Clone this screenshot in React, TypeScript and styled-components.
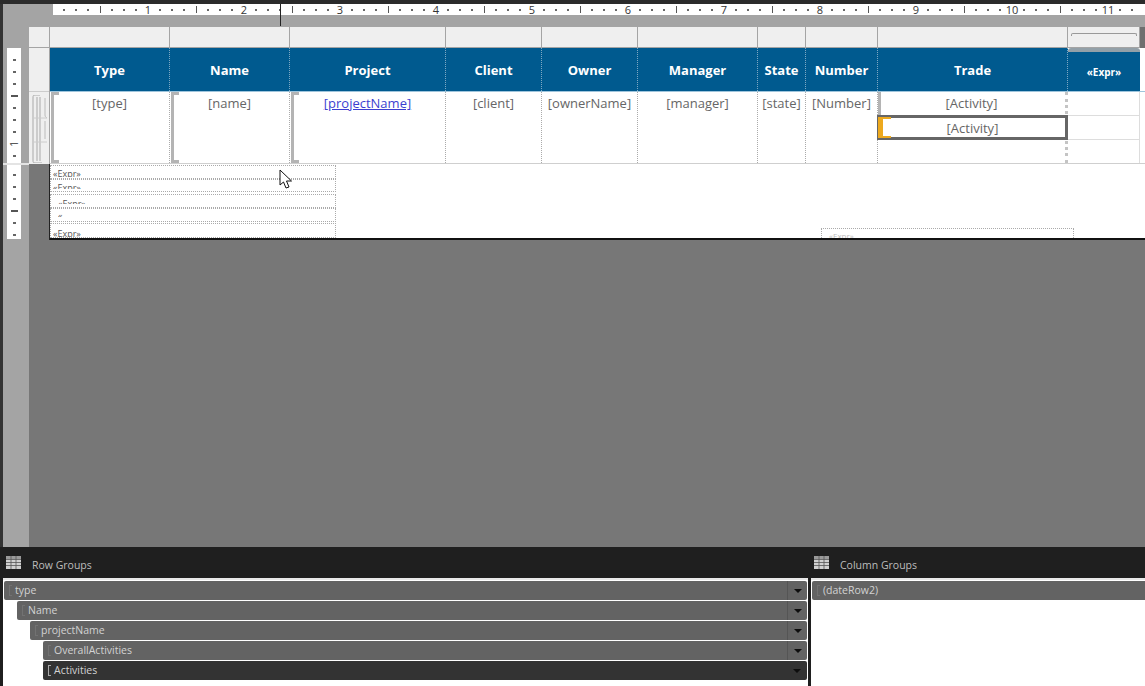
import React from "react";
import styled, { createGlobalStyle } from "styled-components";

const Global = createGlobalStyle`
  html, body { margin: 0; padding: 0; background: #1f1f1f; }
  * { box-sizing: border-box; }
`;

const Root = styled.div`
  position: relative;
  width: 1145px;
  height: 686px;
  overflow: hidden;
  display: flex;
  flex-direction: column;
  font-family: "Open Sans", "Noto Sans", sans-serif;
`;
const TopEdge = styled.div`height: 4px; background: #2b2b2b; flex: none;`;
const Designer = styled.div`height: 543px; flex: none; display: flex;`;
const LeftEdge = styled.div`width: 3px; background: #333; flex: none;`;
const Surface = styled.div`flex: 1; display: flex; flex-direction: column; background: #a4a4a4; min-width: 0;`;
const RulerBand = styled.div`height: 23px; flex: none; padding-left: 50px;`;
const HRuler = styled.div`
  height: 11px;
  background: #fff;
  padding-left: 5px;
  display: flex;
  align-items: center;
`;
const HCell = styled.span`
  flex: none;
  width: 12px;
  text-align: center;
  font-size: 11px;
  line-height: 11px;
  color: #333;
  display: flex;
  align-items: center;
  justify-content: center;
`;
const Dot = styled.i`display: block; width: 2px; height: 2px; background: #666;`;
const Tick = styled.i`display: block; width: 1px; height: 7px; background: #555;`;
const Work = styled.div`flex: 1; display: flex; min-height: 0;`;
const Gutter = styled.div`width: 26px; flex: none; padding: 21px 0 0 4px;`;
const VRuler = styled.div<{ $h: number }>`
  width: 14px;
  height: ${(p) => p.$h}px;
  background: #fff;
  display: flex;
  flex-direction: column;
  align-items: center;
`;
const VCell = styled.span`
  flex: none;
  height: 12px;
  display: flex;
  align-items: center;
  justify-content: center;
  font-size: 10px;
  color: #333;
`;
const VDot = styled.i`display: block; width: 3px; height: 2px; background: #666;`;
const VTick = styled.i`display: block; width: 7px; height: 2px; background: #555;`;
const VDigit = styled.span`display: block; transform: rotate(-90deg); line-height: 10px;`;
const GutterRule = styled.div`height: 2px; margin-left: -4px; width: 26px; background: #e4e4e4;`;
const Spacer = styled.div<{ $h: number }>`height: ${(p) => p.$h}px; flex: none;`;

const Canvas = styled.div`flex: 1; background: #777; display: flex; flex-direction: column; min-width: 0;`;
const Strip = styled.div`height: 21px; flex: none; display: flex; gap: 1px; background: #a4a4a4;`;
const StripCell = styled.div<{ $w: number }>`
  flex: none;
  width: ${(p) => p.$w}px;
  height: 20px;
  background: #efefef;
  display: flex;
  align-items: center;
  justify-content: center;
`;
const StripEnd = styled.div`flex: 1; background: #6f6f6f;`;
const StripBracket = styled.i`
  display: block;
  width: 66px;
  height: 3px;
  margin-top: -5px;
  border: 1px solid #999;
  border-bottom: none;
  border-radius: 2px 2px 0 0;
`;
const TableBand = styled.div`display: flex; flex: none; height: 116px;`;
const Handles = styled.div`
  width: 21px;
  flex: none;
  display: flex;
  flex-direction: column;
  background: #efefef;
  border-right: 1px solid #a4a4a4;
`;
const HandleHead = styled.div`height: 44px; flex: none; border-bottom: 1px solid #ccc;`;
const HandleBody = styled.div`flex: 1; display: flex; padding: 3px 0 0 3px;`;
const TableArea = styled.div`flex: 1; display: flex; flex-direction: column; background: #fff; min-width: 0;`;
const HeaderRow = styled.div`height: 44px; flex: none; display: flex; border-bottom: 1px solid #9fc5dc;`;
const HeaderCell = styled.div<{ $w: number }>`
  flex: none;
  width: ${(p) => p.$w}px;
  background: #005a8f;
  border-right: 1px dotted #7fa9c4;
  color: #fff;
  font-weight: 700;
  font-size: 13px;
  display: flex;
  align-items: center;
  justify-content: center;
`;
const ExprHead = styled(HeaderCell)`
  font-size: 10px;
  border-top: 4px solid #93a0a8;
  border-right: none;
  border-radius: 3px 3px 0 0;
`;
const BodyRow = styled.div`height: 72px; flex: none; display: flex; border-bottom: 1px solid #cfcfcf;`;
const BodyCell = styled.div<{ $w: number; $handle?: boolean }>`
  position: relative;
  flex: none;
  width: ${(p) => p.$w}px;
  border-right: 1px dotted #aaa;
  color: #666;
  font-size: 13px;
  line-height: 18px;
  padding-top: 2px;
  text-align: center;
  ${(p) =>
    p.$handle
      ? `
    &::before {
      content: "";
      position: absolute;
      left: 1px;
      top: 0;
      bottom: 0;
      width: 5px;
      border-left: 3px solid #b4b4b4;
      border-top: 3px solid #b4b4b4;
      border-bottom: 3px solid #b4b4b4;
    }`
      : ""}
`;
const LinkText = styled.a`color: #3c3fd0; text-decoration: underline;`;
const StackCell = styled.div<{ $w: number; $light?: boolean }>`
  flex: none;
  width: ${(p) => p.$w}px;
  display: flex;
  flex-direction: column;
  border-right: ${(p) => (p.$light ? "1px solid #ddd" : "3px dotted #c4c4c4")};
`;
const SubRow = styled.div<{ $h: number; $light?: boolean }>`
  position: relative;
  flex: none;
  height: ${(p) => p.$h}px;
  color: #666;
  font-size: 13px;
  line-height: 22px;
  text-align: center;
  border-bottom: ${(p) => (p.$light ? "1px solid #ddd" : "none")};
`;
const FirstSub = styled(SubRow)`
  &::before {
    content: "";
    position: absolute;
    left: 0;
    top: 0;
    width: 3px;
    height: 23px;
    background: #b4b4b4;
  }
`;
const SelectedSub = styled(SubRow)`
  border: 3px solid #666;
  margin: -1px -3px 0 -1px;
  line-height: 20px;
  background: #fff;
  &::before {
    content: "";
    position: absolute;
    left: -2px;
    top: -1px;
    bottom: -1px;
    width: 8px;
    border: 2px solid #eda91e;
    border-right: none;
    border-left-width: 5px;
  }
`;
const FooterSpace = styled.div`
  margin-left: 21px;
  height: 76px;
  flex: none;
  background: #fff;
  border-bottom: 2px solid #111;
  box-shadow: -1px 0 0 #222;
  display: flex;
  align-items: flex-end;
  overflow: hidden;
`;
const FooterStack = styled.div`width: 286px; flex: none; align-self: flex-start; padding-top: 1px; display: flex; flex-direction: column;`;
const FooterBox = styled.div<{ $h: number; $mt: number; $pl: number; $pt: number }>`
  flex: none;
  height: ${(p) => p.$h}px;
  margin-top: ${(p) => p.$mt}px;
  padding: ${(p) => p.$pt}px 0 0 ${(p) => p.$pl}px;
  border: 1px dotted #aaa;
  overflow: hidden;
  font-size: 9px;
  line-height: 12px;
  color: #555;
`;
const ClippedText = styled.span<{ $h: number }>`
  display: block;
  height: ${(p) => p.$h}px;
  overflow: hidden;
`;
const FarBox = styled.div`
  flex: none;
  margin-left: 485px;
  width: 253px;
  height: 10px;
  border: 1px dotted #aaa;
  border-bottom: none;
  overflow: hidden;
  padding: 2px 0 0 7px;
  font-size: 8px;
  line-height: 10px;
  color: #bbb;
`;
const Panel = styled.div`flex: 1; background: #1f1f1f; display: flex; flex-direction: column; min-height: 0;`;
const PanelHeads = styled.div`height: 31px; flex: none; display: flex; padding-top: 4px;`;
const PanelHead = styled.div<{ $w?: number }>`
  ${(p) => (p.$w ? `width: ${p.$w}px; flex: none;` : "flex: 1;")}
  display: flex;
  align-items: center;
  color: #bdbdbd;
  font-size: 10.5px;
`;
const HeadIcon = styled.span<{ $ml: number; $mr: number }>`
  display: flex;
  margin-left: ${(p) => p.$ml}px;
  margin-right: ${(p) => p.$mr}px;
  margin-top: -5px;
  flex: none;
`;
const Lists = styled.div`flex: 1; display: flex; min-height: 0;`;
const ListBox = styled.div<{ $w?: number }>`
  ${(p) => (p.$w ? `width: ${p.$w}px; flex: none;` : "flex: 1;")}
  background: #fff;
  border-top: 2px solid #e8e8e8;
  padding-top: 1px;
  display: flex;
  flex-direction: column;
  gap: 1px;
  min-width: 0;
`;
const ListSide = styled.div<{ $w: number }>`width: ${(p) => p.$w}px; flex: none;`;
const GroupRow = styled.div<{ $indent?: number; $active?: boolean; $trail?: number }>`
  flex: none;
  height: 19px;
  margin-left: ${(p) => p.$indent ?? 0}px;
  margin-right: ${(p) => p.$trail ?? 0}px;
  background: ${(p) => (p.$active ? "#333" : "#636363")};
  border-radius: 2px;
  color: #d2d2d2;
  font-size: 10.5px;
  display: flex;
  align-items: center;
  padding: 0 0 0 5px;
`;
const GroupMark = styled.i<{ $active?: boolean }>`
  display: block;
  width: 3px;
  height: 11px;
  margin-right: 3px;
  border: 1px solid ${(p) => (p.$active ? "#aaa" : "#727272")};
  border-right: none;
  flex: none;
`;
const GroupName = styled.span`flex: 1; padding-bottom: 2px;`;
const DropCell = styled.div<{ $active?: boolean }>`
  width: 20px;
  height: 100%;
  flex: none;
  display: flex;
  align-items: center;
  justify-content: center;
  border-left: ${(p) => (p.$active ? "none" : "1px solid #555")};
`;
const DropArrow = styled.i`
  display: block;
  width: 0;
  height: 0;
  border-left: 4px solid transparent;
  border-right: 4px solid transparent;
  border-top: 4px solid #0d0d0d;
`;
const RulerMarker = styled.div`
  position: absolute;
  left: 280px;
  top: 4px;
  width: 1px;
  height: 22px;
  background: #222;
`;
const Cursor = styled.svg`position: absolute; left: 279px; top: 169px;`;

const cols = [
  ["Type", 120, "[type]"],
  ["Name", 120, "[name]"],
  ["Project", 156, "[projectName]"],
  ["Client", 96, "[client]"],
  ["Owner", 96, "[ownerName]"],
  ["Manager", 120, "[manager]"],
  ["State", 48, "[state]"],
  ["Number", 72, "[Number]"],
] as const;

const groups: [string, number, boolean][] = [
  ["type", 1, false],
  ["Name", 14, false],
  ["projectName", 27, false],
  ["OverallActivities", 40, false],
  ["Activities", 40, true],
];

const footerRows = [
  { h: 14, mt: 0, pl: 2, pt: 2, clip: 9, text: "«Expr»" },
  { h: 13, mt: 0, pl: 2, pt: 2, clip: 7, text: "«Expr»" },
  { h: 14, mt: 2, pl: 7, pt: 3, clip: 6, text: "«Expr»" },
  { h: 14, mt: 0, pl: 7, pt: 1, clip: 7, text: "«" },
  { h: 15, mt: 1, pl: 2, pt: 4, clip: 9, text: "«Expr»" },
];

const GridIcon = () => (
  <svg width="15" height="13" viewBox="0 0 15 13">
    <rect width="15" height="13" fill="#d0d0d0" />
    <rect width="15" height="3" fill="#9a9a9a" />
    <path d="M0 3.5H15M0 6.5H15M0 9.5H15M5 0V13M10 0V13" stroke="#555" strokeWidth="0.8" />
  </svg>
);

export default function App() {
  const hCells = Array.from({ length: 90 }, (_, k) => k);
  const vTop = [0, 0, 0, 2, 0, 0, 0, 3, 0];
  const vBottom = [0, 0, 0, 2, 0, 0];
  return (
    <>
      <Global />
      <Root>
        <TopEdge />
        <Designer>
          <LeftEdge />
          <Surface>
            <RulerBand>
              <HRuler>
                {hCells.map((k) => (
                  <HCell key={k}>
                    {k % 8 === 7 ? (k + 1) / 8 : k % 8 === 3 ? <Tick /> : <Dot />}
                  </HCell>
                ))}
              </HRuler>
            </RulerBand>
            <Work>
              <Gutter>
                <VRuler $h={115}>
                  <Spacer $h={6} />
                  {vTop.map((v, i) => (
                    <VCell key={i}>
                      {v === 2 ? <VTick /> : v === 3 ? <VDigit>1</VDigit> : <VDot />}
                    </VCell>
                  ))}
                </VRuler>
                <GutterRule />
                <VRuler $h={74}>
                  <Spacer $h={4} />
                  {vBottom.map((v, i) => (
                    <VCell key={i}>{v === 2 ? <VTick /> : <VDot />}</VCell>
                  ))}
                </VRuler>
              </Gutter>
              <Canvas>
                <Strip>
                  <StripCell $w={20} />
                  {[119, 119, 155, 95, 95, 119, 47, 71, 189].map((w, i) => (
                    <StripCell key={i} $w={w} />
                  ))}
                  <StripCell $w={71}>
                    <StripBracket />
                  </StripCell>
                  <StripEnd />
                </Strip>
                <TableBand>
                  <Handles>
                    <HandleHead />
                    <HandleBody>
                      <svg width="15" height="68" viewBox="0 0 15 68" fill="none" stroke="#a9a9a9">
                        <path d="M3 68C1 68 1 67 1 65V3C1 1 1 0 3 0H8M5 66V2M8 66V2M3 68H10" />
                        <path d="M13 3V20C13 22 14 22 15 23M13 26V44" stroke="#bbb" />
                        <path d="M0 23H15M0 47H15" stroke="#ccc" />
                      </svg>
                    </HandleBody>
                  </Handles>
                  <TableArea>
                    <HeaderRow>
                      {cols.map(([h, w]) => (
                        <HeaderCell key={h} $w={w}>{h}</HeaderCell>
                      ))}
                      <HeaderCell $w={190}>Trade</HeaderCell>
                      <ExprHead $w={72}>«Expr»</ExprHead>
                    </HeaderRow>
                    <BodyRow>
                      {cols.map(([h, w, t], i) => (
                        <BodyCell key={h} $w={w} $handle={i < 3}>
                          {i === 2 ? <LinkText>{t}</LinkText> : t}
                        </BodyCell>
                      ))}
                      <StackCell $w={190}>
                        <FirstSub $h={24}>[Activity]</FirstSub>
                        <SelectedSub $h={25}>[Activity]</SelectedSub>
                      </StackCell>
                      <StackCell $w={72} $light>
                        <SubRow $h={24} $light />
                        <SubRow $h={24} $light />
                      </StackCell>
                    </BodyRow>
                  </TableArea>
                </TableBand>
                <FooterSpace>
                  <FooterStack>
                    {footerRows.map((r, i) => (
                      <FooterBox key={i} $h={r.h} $mt={r.mt} $pl={r.pl} $pt={r.pt}>
                        <ClippedText $h={r.clip}>{r.text}</ClippedText>
                      </FooterBox>
                    ))}
                  </FooterStack>
                  <FarBox>«Expr»</FarBox>
                </FooterSpace>
              </Canvas>
            </Work>
          </Surface>
        </Designer>
        <Panel>
          <PanelHeads>
            <PanelHead $w={811}>
              <HeadIcon $ml={6} $mr={11}><GridIcon /></HeadIcon>
              Row Groups
            </PanelHead>
            <PanelHead>
              <HeadIcon $ml={3} $mr={11}><GridIcon /></HeadIcon>
              Column Groups
            </PanelHead>
          </PanelHeads>
          <Lists>
            <ListSide $w={3} />
            <ListBox $w={805}>
              {groups.map(([name, indent, active]) => (
                <GroupRow key={name} $indent={indent} $active={active} $trail={1}>
                  <GroupMark $active={active} />
                  <GroupName>{name}</GroupName>
                  <DropCell $active={active}><DropArrow /></DropCell>
                </GroupRow>
              ))}
            </ListBox>
            <ListSide $w={3} />
            <ListBox>
              <GroupRow $indent={1} $trail={-3}>
                <GroupMark />
                <GroupName>(dateRow2)</GroupName>
              </GroupRow>
            </ListBox>
          </Lists>
        </Panel>
        <RulerMarker />
        <Cursor width="14" height="21" viewBox="0 0 14 21">
          <path d="M1 1V16L4.5 13L7 19L10 18L7.5 12H12.5Z" fill="#fff" stroke="#111" strokeWidth="1" strokeLinejoin="miter" />
        </Cursor>
      </Root>
    </>
  );
}
